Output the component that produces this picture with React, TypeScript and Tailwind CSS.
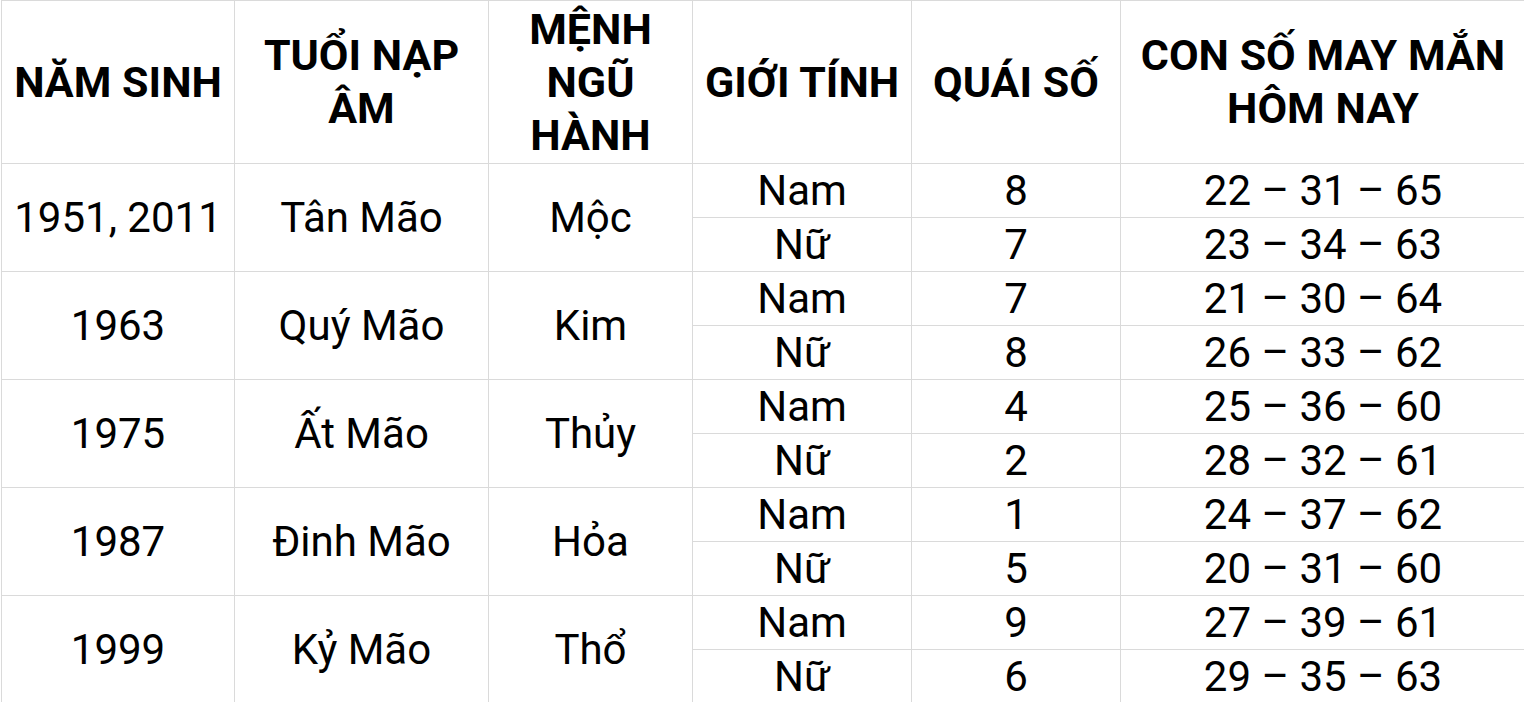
import React from "react";

const groups = [
  { year: "1951, 2011", tuoi: "Tân Mão", menh: "Mộc", rows: [["Nam", "8", "22 – 31 – 65"], ["Nữ", "7", "23 – 34 – 63"]] },
  { year: "1963", tuoi: "Quý Mão", menh: "Kim", rows: [["Nam", "7", "21 – 30 – 64"], ["Nữ", "8", "26 – 33 – 62"]] },
  { year: "1975", tuoi: "Ất Mão", menh: "Thủy", rows: [["Nam", "4", "25 – 36 – 60"], ["Nữ", "2", "28 – 32 – 61"]] },
  { year: "1987", tuoi: "Đinh Mão", menh: "Hỏa", rows: [["Nam", "1", "24 – 37 – 62"], ["Nữ", "5", "20 – 31 – 60"]] },
  { year: "1999", tuoi: "Kỷ Mão", menh: "Thổ", rows: [["Nam", "9", "27 – 39 – 61"], ["Nữ", "6", "29 – 35 – 63"]] },
];

const th = "border border-[#dadada] font-bold text-[43px] leading-[53px] text-center align-middle p-0 whitespace-nowrap";
const td = "border border-[#dadada] text-[42px] leading-[53px] text-center align-middle p-0 whitespace-nowrap";

export default function App() {
  return (
    <div className="w-[1524px] h-[702px] overflow-hidden bg-white text-black" style={{ fontFamily: "Roboto, 'Noto Sans', sans-serif" }}>
      <table className="border-collapse table-fixed ml-[1px]" style={{ width: 1540 }}>
        <colgroup>
          <col style={{ width: 233 }} />
          <col style={{ width: 254 }} />
          <col style={{ width: 204 }} />
          <col style={{ width: 219 }} />
          <col style={{ width: 209 }} />
          <col style={{ width: 421 }} />
        </colgroup>
        <thead>
          <tr className="h-[163px]">
            <th className={th}>NĂM SINH</th>
            <th className={th}>TUỔI NẠP<br />ÂM</th>
            <th className={th}>MỆNH<br />NGŨ<br />HÀNH</th>
            <th className={th}>GIỚI TÍNH</th>
            <th className={th}>QUÁI SỐ</th>
            <th className={th}><div className="w-[404px]">CON SỐ MAY MẮN<br />HÔM NAY</div></th>
          </tr>
        </thead>
        <tbody>
          {groups.map((g) => (
            <React.Fragment key={g.year}>
              <tr className="h-[54px]">
                <td rowSpan={2} className={td}>{g.year}</td>
                <td rowSpan={2} className={td}>{g.tuoi}</td>
                <td rowSpan={2} className={td}>{g.menh}</td>
                <td className={td}>{g.rows[0][0]}</td>
                <td className={td}>{g.rows[0][1]}</td>
                <td className={td}><div className="w-[404px]">{g.rows[0][2]}</div></td>
              </tr>
              <tr className="h-[54px]">
                <td className={td}>{g.rows[1][0]}</td>
                <td className={td}>{g.rows[1][1]}</td>
                <td className={td}><div className="w-[404px]">{g.rows[1][2]}</div></td>
              </tr>
            </React.Fragment>
          ))}
        </tbody>
      </table>
    </div>
  );
}
